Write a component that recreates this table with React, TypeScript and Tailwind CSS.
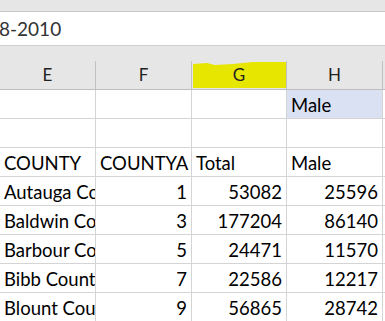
import React from 'react'

const cols = ['E', 'F', 'G', 'H']
const widths = ['w-[96px]', 'w-[96px]', 'w-[95px]', 'w-[96px]']

type Cell = { v: string; right?: boolean; blue?: boolean }

const rows: Cell[][] = [
  [{ v: '' }, { v: '' }, { v: '' }, { v: 'Male', blue: true }],
  [{ v: '' }, { v: '' }, { v: '' }, { v: '' }],
  [{ v: 'COUNTY' }, { v: 'COUNTYA' }, { v: 'Total' }, { v: 'Male' }],
  [{ v: 'Autauga County' }, { v: '1', right: true }, { v: '53082', right: true }, { v: '25596', right: true }],
  [{ v: 'Baldwin County' }, { v: '3', right: true }, { v: '177204', right: true }, { v: '86140', right: true }],
  [{ v: 'Barbour County' }, { v: '5', right: true }, { v: '24471', right: true }, { v: '11570', right: true }],
  [{ v: 'Bibb County' }, { v: '7', right: true }, { v: '22586', right: true }, { v: '12217', right: true }],
  [{ v: 'Blount County' }, { v: '9', right: true }, { v: '56865', right: true }, { v: '28742', right: true }],
]

export default function App() {
  return (
    <div className="w-[385px] h-[321px] overflow-hidden bg-white font-['Lato','Liberation_Sans',sans-serif] text-black">
      {/* barre du haut */}
      <div className="h-[12px] bg-[#e6e6e6] border-b border-[#c8c8c8]" />
      {/* barre de formule */}
      <div className="h-[34px] bg-white border-b border-[#d0d0d0] flex items-center">
        <span className="text-[19px] text-[#333] -ml-[1px] leading-none">8-2010</span>
      </div>
      <div className="h-[15px] bg-[#e6e6e6]" />
      {/* en-têtes de colonnes */}
      <div className="flex h-[29px] bg-[#e6e6e6] border-b border-[#bdbdbd]">
        {cols.map((c, i) => (
          <div key={c} className={`${widths[i]} shrink-0 relative border-r border-[#c0c0c0] flex items-center justify-center text-[17px] text-[#222]`}>
            {c === 'G' && (
              <div className="absolute left-[1px] right-0 top-[1px] bottom-[1px] bg-[#e6e600] [clip-path:polygon(0_2px,14px_1px,22px_3px,40px_2px,60px_0,100%_0,100%_100%,0_100%)]" />
            )}
            <span className="relative">{c}</span>
          </div>
        ))}
        <div className="flex-1" />
      </div>
      {rows.map((r, ri) => (
        <div key={ri} className="flex h-[29px] border-b border-[#d4d4d4]">
          {r.map((cell, ci) => (
            <div
              key={ci}
              className={`${widths[ci]} shrink-0 overflow-hidden whitespace-nowrap border-r border-[#d4d4d4] flex items-end pb-[4px] pl-[4px] pr-[4px] text-[18.5px] leading-none ${cell.right ? 'justify-end' : 'justify-start'} ${cell.blue ? 'bg-[#d9e1f2]' : ''} ${ci === 0 ? 'pl-[3px]' : ''}`}
            >
              {cell.v}
            </div>
          ))}
          <div className="flex-1" />
        </div>
      ))}
    </div>
  )
}
